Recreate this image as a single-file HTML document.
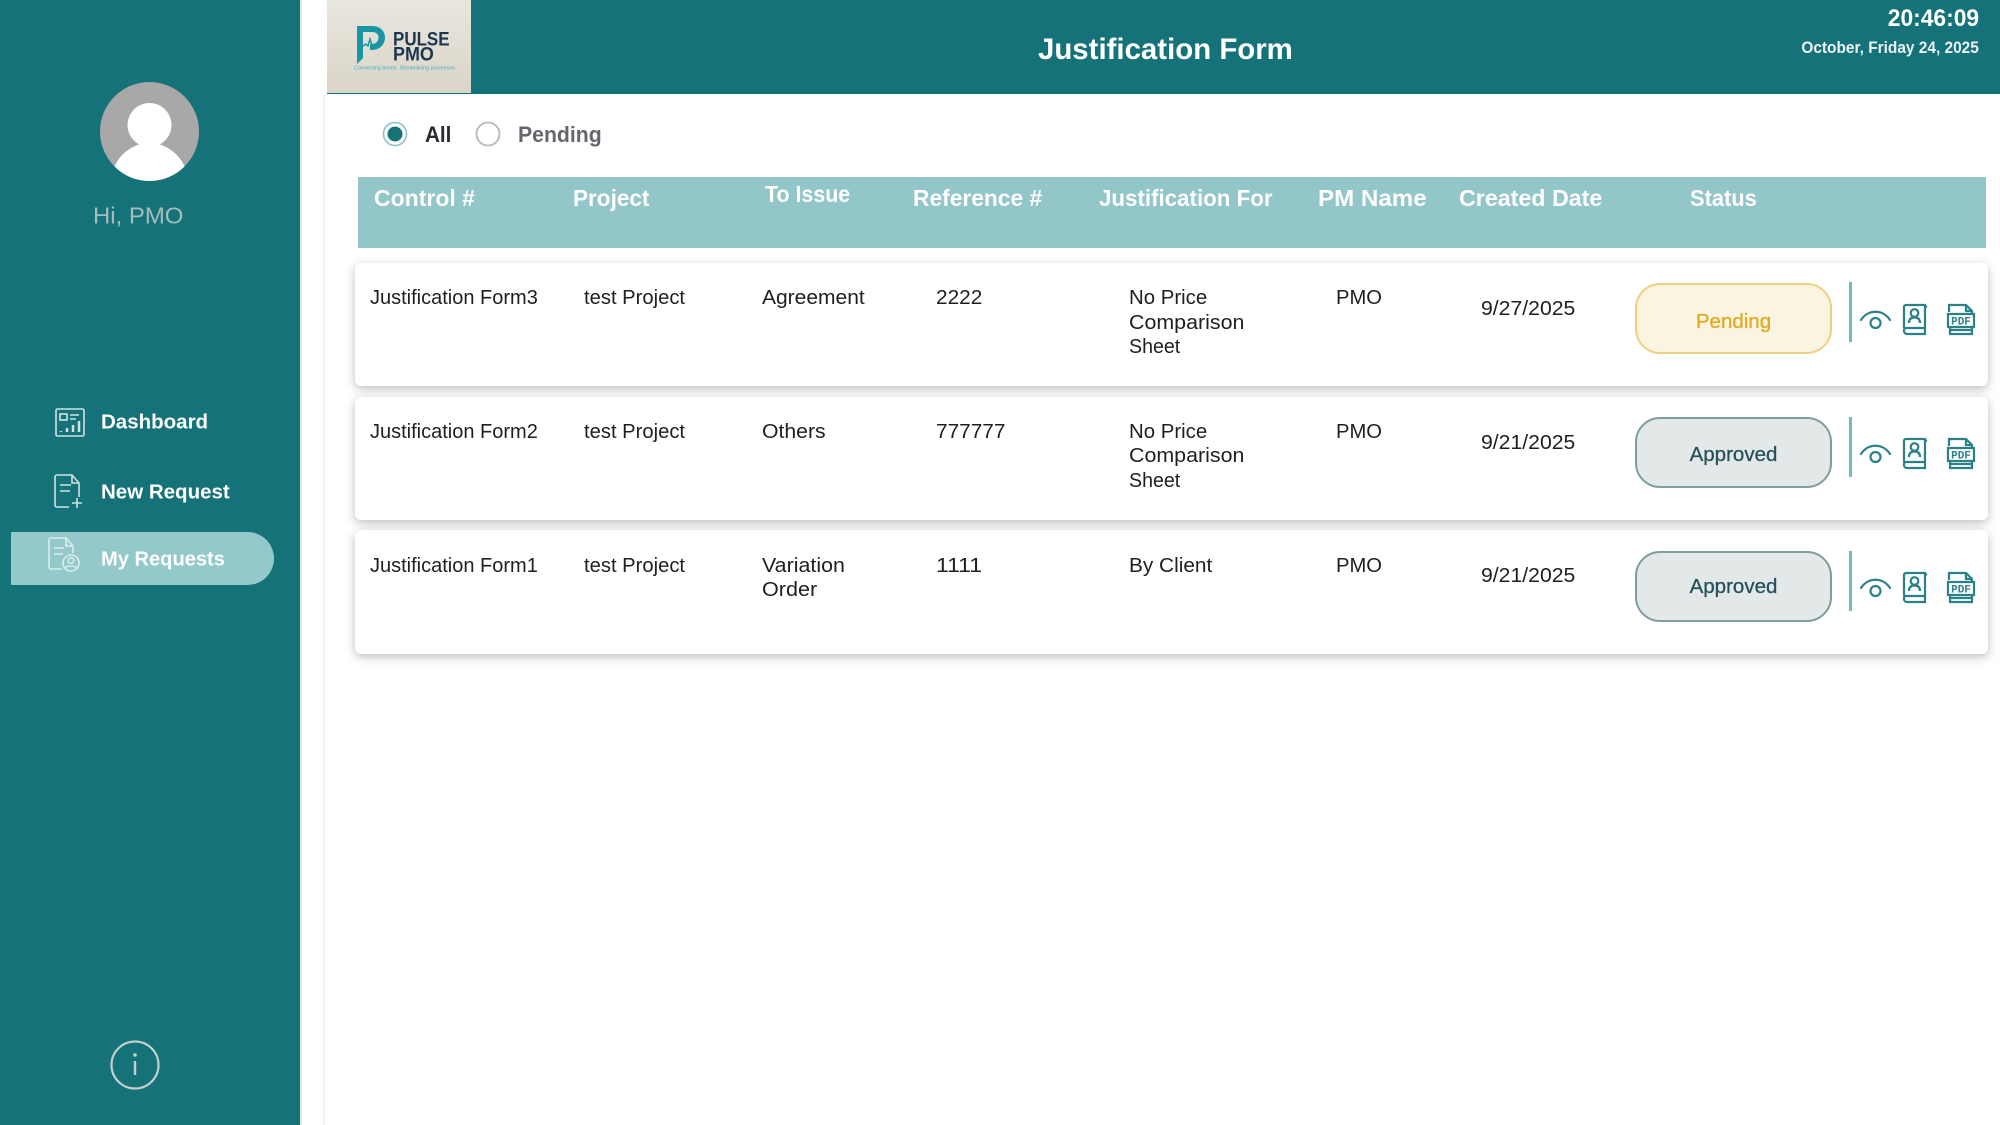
<!DOCTYPE html>
<html><head><meta charset="utf-8">
<style>
html,body{margin:0;padding:0;width:2000px;height:1125px;overflow:hidden;background:#fff}
body{position:relative;font-family:"Liberation Sans",sans-serif}
.a{position:absolute}
.t{position:absolute;white-space:nowrap;line-height:1;transform-origin:left center}
.c{font-size:20px;color:#1f1f1f;transform:translateY(calc(-50% + 1px)) scaleX(var(--s,1))}
.h{font-size:23px;font-weight:bold;color:#fff;transform:translateY(calc(-50% + .5px)) scaleX(var(--s,1))}
.n{font-size:20.5px;font-weight:bold;color:#fff;transform:translateY(calc(-50% + .5px)) scaleX(var(--s,1))}
.row{position:absolute;left:355px;width:1633px;height:123px;background:#fff;border-radius:6px;box-shadow:0 3px 10px rgba(0,0,0,.26)}
.pill{position:absolute;left:1635px;width:197px;height:71px;box-sizing:border-box;border-radius:25px;border:2px solid;text-align:center;line-height:67px;font-size:20.5px;-webkit-text-stroke:.3px currentColor}
.ok{background:#e3e9e9;border-color:#7f9c9e;color:#26505a}
.pe{background:#fbf4e1;border-color:#eed07f;color:#e0aa22}
.div{position:absolute;left:1849px;width:3px;height:60px;background:#6dbcc0}
svg{position:absolute;overflow:visible}
</style></head><body>
<div class="a" style="left:0;top:0;width:300px;height:1125px;background:#157278"></div>
<div class="a" style="left:300px;top:0;width:2px;height:1125px;background:#e6e6e6"></div>
<div class="a" style="left:323px;top:94px;width:2px;height:1031px;background:#f1f1f1"></div>
<div class="a" style="left:327px;top:0;width:1673px;height:94px;background:#157278"></div>

<svg style="left:0;top:0" width="300" height="300">
<defs><clipPath id="av"><circle cx="149.500" cy="131.500" r="49.500"/></clipPath></defs>
<circle cx="149.500" cy="131.500" r="49.500" fill="#a8a8a8"/>
<g clip-path="url(#av)" fill="#fff"><circle cx="149.500" cy="125" r="22"/><ellipse cx="149.500" cy="185" rx="39" ry="42"/></g>
</svg>
<div class="t" style="left:93px;top:216px;font-size:23px;color:#a7bcbd;transform:translateY(-50%) scaleX(1.04)">Hi, PMO</div>

<div class="a" style="left:11px;top:532px;width:263px;height:53px;background:#94c9cc;border-radius:1px 27px 27px 1px"></div>

<svg style="left:54.500px;top:408px" width="30" height="30" fill="none" stroke="#cfe3e3" stroke-width="1.600">
<rect x="1" y="1" width="28" height="27" rx="1.500"/><rect x="5" y="6" width="7" height="6"/><path d="M15 7h9M15 11h6"/>
<path d="M6 23v1M12 20v4M18 17v7M24 13v11" stroke-width="2.500"/></svg>
<div class="t n" style="left:101px;top:422px;--s:1">Dashboard</div>

<svg style="left:52.500px;top:474px" width="30" height="36" fill="none" stroke="#cfe3e3" stroke-width="1.600">
<path d="M16 33H4a2 2 0 0 1-2-2V3a2 2 0 0 1 2-2h15l7 8v14M19 1v8h7M7 11h11M7 17h10M24 24v10M19 29h10"/></svg>
<div class="t n" style="left:101px;top:491.500px;--s:1">New Request</div>

<svg style="left:46.500px;top:537px" width="34" height="36" fill="none" stroke="#dcecec" stroke-width="1.600">
<path d="M15 32H4a2 2 0 0 1-2-2V3a2 2 0 0 1 2-2h15l7 8v7M19 1v8h7M7 11h10M7 17h9"/>
<circle cx="24" cy="26" r="8"/><circle cx="24" cy="23.500" r="2.800"/><path d="M18.500 31.500c1-3.500 10-3.500 11 0"/></svg>
<div class="t n" style="left:101px;top:559px;--s:.98">My Requests</div>

<svg style="left:110px;top:1040px" width="50" height="50" fill="none" stroke="#c4cfcf" stroke-width="2.200">
<circle cx="25" cy="25" r="23.500"/><path d="M25 21v14" stroke-width="2.400"/><circle cx="25" cy="15" r="1.800" fill="#c4cfcf" stroke="none"/></svg>

<div class="a" style="left:327px;top:0;width:144px;height:93px;background:linear-gradient(180deg,#e9e6de,#dad5c8)"></div>
<svg style="left:356px;top:25px" width="34" height="42" fill="none">
<path d="M1 39V1h15c9 0 13 6 13 11.500S25 25 16 25h-2v-6h2c4 0 6.500-3 6.500-6.500S20 7 16 7H7v26z" fill="#1a95a3"/>
<path d="M7 21l3-2 2 2 2-7 2 6h3" stroke="#1a95a3" stroke-width="1.500"/></svg>
<div class="t" style="left:393px;top:40px;font-size:19.500px;font-weight:bold;color:#1e3550;transform:translateY(-50%) scaleX(.87)">PULSE</div>
<div class="t" style="left:393px;top:55px;font-size:19.500px;font-weight:bold;color:#1e3550;transform:translateY(-50%) scaleX(.92)">PMO</div>
<div class="t" style="left:354px;top:69px;font-size:5.300px;color:#3fb0ba;transform:translateY(-50%)">Connecting teams. Streamlining processes.</div>

<div class="t" style="left:1038px;top:50px;font-size:30px;font-weight:bold;color:#fff;transform:translateY(-50%) scaleX(.98)">Justification Form</div>
<div class="t" style="right:21px;top:19px;font-size:24px;font-weight:bold;color:#fff;transform:translateY(-50%) scaleX(.95);transform-origin:right center">20:46:09</div>
<div class="t" style="right:21px;top:48px;font-size:16.500px;font-weight:bold;color:#eaf4f4;transform:translateY(-50%) scaleX(.935);transform-origin:right center">October, Friday 24, 2025</div>

<svg style="left:380px;top:120px" width="125" height="30" fill="none">
<circle cx="15" cy="14" r="11.500" fill="#fff" stroke="#8fc2c6" stroke-width="1.600"/><circle cx="15" cy="14" r="7.500" fill="#157278"/>
<circle cx="108" cy="14" r="11.500" fill="#fff" stroke="#b7b7b7" stroke-width="1.800"/></svg>
<div class="t" style="left:425px;top:135px;font-size:22px;font-weight:bold;color:#2a2a35;transform:translateY(-50%) scaleX(.94)">All</div>
<div class="t" style="left:518px;top:135px;font-size:22px;font-weight:bold;color:#66666e;transform:translateY(-50%) scaleX(.965)">Pending</div>

<div class="a" style="left:358px;top:177px;width:1628px;height:71px;background:#92c6c9"></div>
<div class="t h" style="left:374px;top:198px;--s:1">Control #</div>
<div class="t h" style="left:573px;top:198px;--s:.98">Project</div>
<div class="t h" style="left:765px;top:194px;--s:.93">To Issue</div>
<div class="t h" style="left:913px;top:198px;--s:.99">Reference #</div>
<div class="t h" style="left:1099px;top:198px;--s:.97">Justification For</div>
<div class="t h" style="left:1318px;top:198px;--s:1.05">PM Name</div>
<div class="t h" style="left:1459px;top:198px;--s:1.01">Created Date</div>
<div class="t h" style="left:1690px;top:198px;--s:.95">Status</div>

<div class="row" style="top:263px"></div>
<div class="row" style="top:397px"></div>
<div class="row" style="top:530px;height:124px"></div>

<div class="t c" style="left:370px;top:297px;--s:1">Justification Form3</div>
<div class="t c" style="left:584px;top:297px;--s:1.01">test Project</div>
<div class="t c" style="left:762px;top:297px;--s:1.05">Agreement</div>
<div class="t c" style="left:936px;top:297px;--s:1.04">2222</div>
<div class="t c" style="left:1129px;top:297px;--s:1.02">No Price</div>
<div class="t c" style="left:1129px;top:322px;--s:1.07">Comparison</div>
<div class="t c" style="left:1129px;top:346px;--s:.98">Sheet</div>
<div class="t c" style="left:1336px;top:297px;--s:1.01">PMO</div>
<div class="t c" style="left:1481px;top:308px;--s:1.06">9/27/2025</div>

<div class="t c" style="left:370px;top:431px;--s:1">Justification Form2</div>
<div class="t c" style="left:584px;top:431px;--s:1.01">test Project</div>
<div class="t c" style="left:762px;top:431px;--s:1.06">Others</div>
<div class="t c" style="left:936px;top:431px;--s:1.04">777777</div>
<div class="t c" style="left:1129px;top:431px;--s:1.02">No Price</div>
<div class="t c" style="left:1129px;top:455px;--s:1.07">Comparison</div>
<div class="t c" style="left:1129px;top:480px;--s:.98">Sheet</div>
<div class="t c" style="left:1336px;top:431px;--s:1.01">PMO</div>
<div class="t c" style="left:1481px;top:442px;--s:1.06">9/21/2025</div>

<div class="t c" style="left:370px;top:565px;--s:1">Justification Form1</div>
<div class="t c" style="left:584px;top:565px;--s:1.01">test Project</div>
<div class="t c" style="left:762px;top:565px;--s:1.07">Variation</div>
<div class="t c" style="left:762px;top:589px;--s:1.08">Order</div>
<div class="t c" style="left:936px;top:565px;--s:1.15">1111</div>
<div class="t c" style="left:1129px;top:565px;--s:1.04">By Client</div>
<div class="t c" style="left:1336px;top:565px;--s:1.01">PMO</div>
<div class="t c" style="left:1481px;top:575px;--s:1.06">9/21/2025</div>

<div class="pill pe" style="top:283px;line-height:74px">Pending</div>
<div class="pill ok" style="top:417px;line-height:71px">Approved</div>
<div class="pill ok" style="top:551px;line-height:67px">Approved</div>
<div class="div" style="top:282px"></div>
<div class="div" style="top:417px"></div>
<div class="div" style="top:551px"></div>

<svg width="0" height="0" style="position:absolute"><defs>
<g id="ic" fill="none" stroke="#2a8288" stroke-width="2.200">
<path d="M1 17C8 6 23 6 30 17" stroke-linecap="round"/><circle cx="15.500" cy="20" r="5"/>
<g transform="translate(42 0)">
<path d="M2 25V4a2 2 0 0 1 2-2h19v29H5a3 3 0 0 1-3-3v-1a2 2 0 0 1 2-2h19M23 3l2 1"/>
<circle cx="12.500" cy="10" r="3.800"/><path d="M7 20c0-4 2-5.500 5.500-5.500S18 16 18 20"/></g>
<g transform="translate(86 -1)">
<path d="M3 10V3h17l6 6v3M2 12h26v13H2zM4 25v7h22v-7M4 28h22M20 3v6h6"/>
<text x="15" y="22.500" text-anchor="middle" font-family="Liberation Mono" font-weight="bold" font-size="11" fill="#2a8288" stroke="none">PDF</text></g>
</g></defs></svg>
<svg style="left:1860px;top:303px" width="120" height="35"><use href="#ic"/></svg>
<svg style="left:1860px;top:437px" width="120" height="35"><use href="#ic"/></svg>
<svg style="left:1860px;top:571px" width="120" height="35"><use href="#ic"/></svg>
</body></html>
